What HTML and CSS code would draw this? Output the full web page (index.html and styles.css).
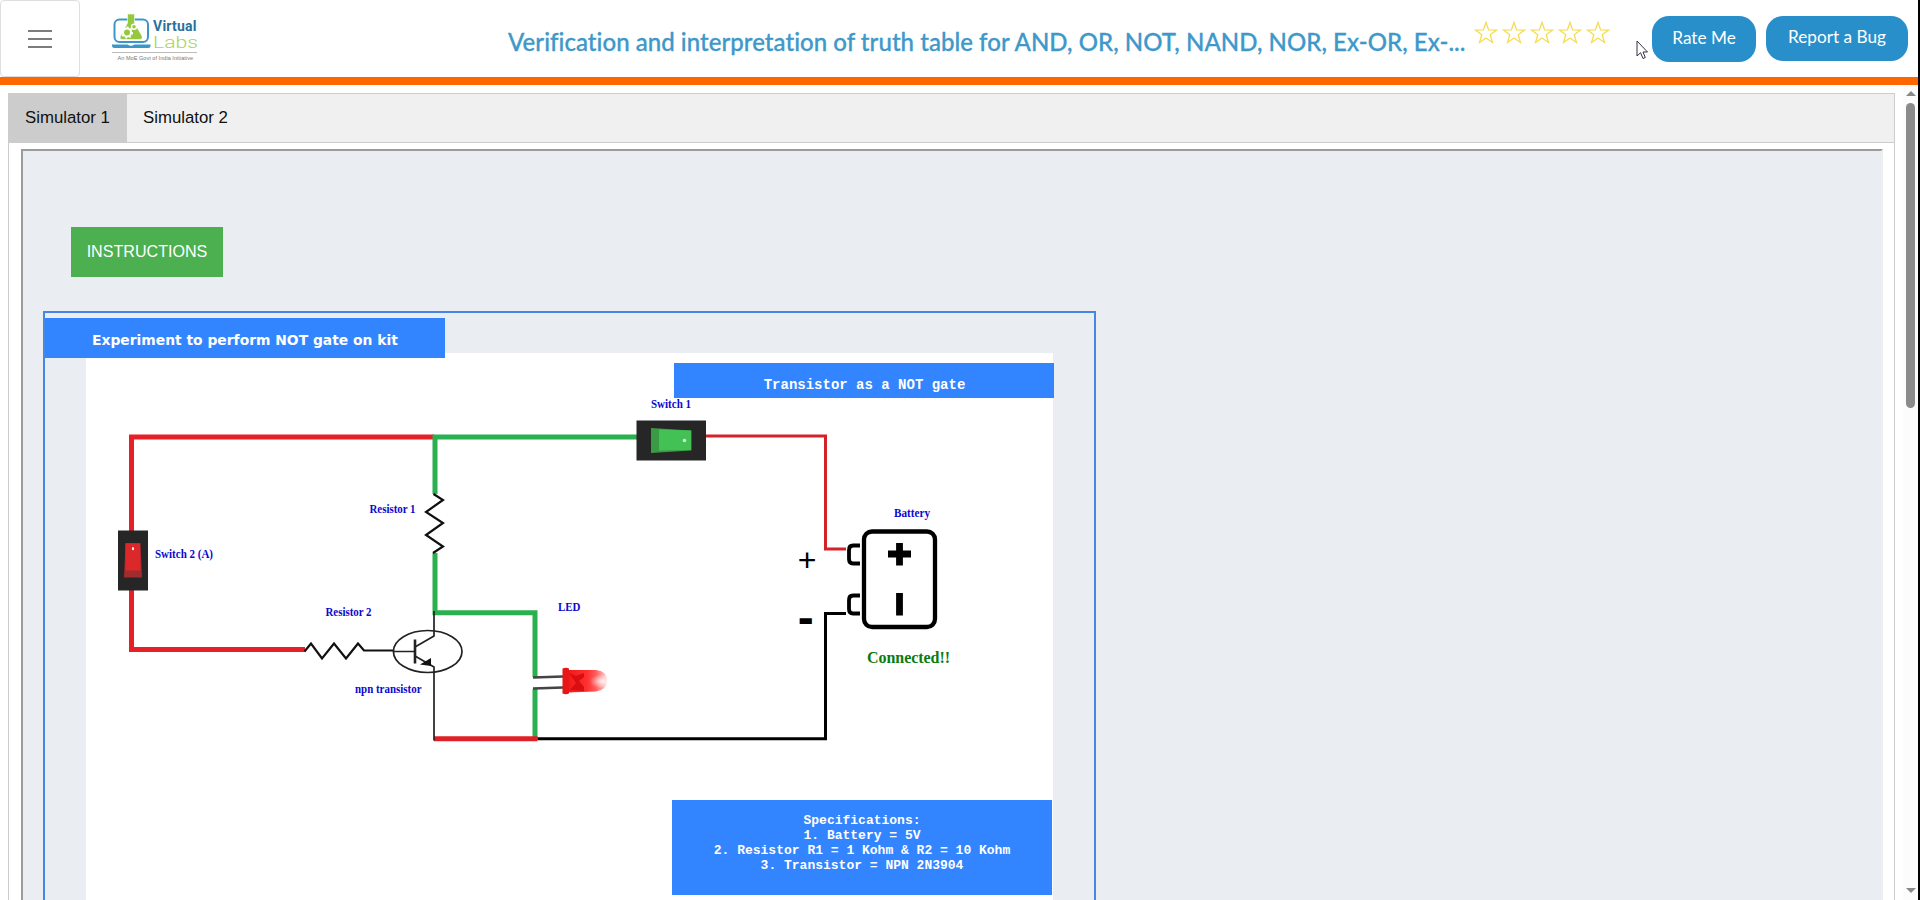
FILE: index.html
```html
<!DOCTYPE html>
<html lang="en">
<head>
<meta charset="utf-8">
<title>Virtual Labs</title>
<link rel="stylesheet" href="styles.css">
</head>
<body>
<div class="page">
  <header class="header">
    <button class="menu" aria-label="Menu"><span></span><span></span><span></span></button>
    <svg class="logo" viewBox="110 10 92 54">
      <rect x="114.500" y="19.500" width="33.500" height="22.500" rx="5" fill="#fff" stroke="#3c97c9" stroke-width="2"/>
      <path d="M112 44.500H127.500Q131 47 134.500 44.500H150.500V46.500Q150 48 148 48H114.500Q112 48 112 46Z" fill="#3c97c9"/>
      <path d="M127.500 14H134.500V23L142 36Q143 39.500 139.500 39.500H123Q119 39.500 120.500 36L127.500 23Z" fill="#95c93d" stroke="#fff" stroke-width=".6"/>
      <circle cx="127" cy="32.500" r="4" fill="#95c93d" stroke="#fff" stroke-width="2"/>
      <circle cx="127" cy="32.500" r="5.300" fill="none" stroke="#fff" stroke-width="1.400" stroke-dasharray="2 2"/>
      <circle cx="134" cy="26.700" r="2.500" fill="#95c93d" stroke="#fff" stroke-width="1.400"/>
      <text class="logo-virtual" x="153" y="31" textLength="43.500">Virtual</text>
      <text class="logo-labs" x="153" y="48" textLength="45" lengthAdjust="spacingAndGlyphs">Labs</text>
      <path d="M112 52.500H197" stroke="#bbb" stroke-width="1"/>
      <text class="logo-sub" x="117.500" y="59.500" textLength="75.500">An MoE Govt of India Initiative</text>
    </svg>
    <h1 class="title">Verification and interpretation of truth table for AND, OR, NOT, NAND, NOR, Ex-OR, Ex-...</h1>
    <svg class="stars" viewBox="0 0 140 24">
      <defs><path id="star" d="M12 1.500L14.600 8.800L22.500 9L16.200 13.800L18.500 21.500L12 17L5.500 21.500L7.800 13.800L1.500 9L9.400 8.800Z"/></defs>
      <use href="#star"/><use href="#star" x="28"/><use href="#star" x="56"/><use href="#star" x="84"/><use href="#star" x="112"/>
    </svg>
    <button class="pill rate">Rate Me</button>
    <button class="pill report">Report a Bug</button>
  </header>
  <div class="body">
    <main class="panel">
      <nav class="tabs"><a class="tab active">Simulator 1</a><a class="tab">Simulator 2</a></nav>
      <section class="frame">
        <button class="instructions">INSTRUCTIONS</button>
        <div class="kit">
          <h2 class="kit-title">Experiment to perform NOT gate on kit</h2>
          <div class="board">
            <svg class="circuit" viewBox="86 353 968 547">
              <defs>
                <linearGradient id="led"><stop offset="0" stop-color="#f01818"/><stop offset=".5" stop-color="#ff3030"/><stop offset=".72" stop-color="#ff5c5c"/><stop offset="1" stop-color="#ffd6d6"/></linearGradient>
                <radialGradient id="glow" cx=".88" cy=".5" r=".32"><stop offset="0" stop-color="#fff" stop-opacity=".8"/><stop offset="1" stop-color="#fff" stop-opacity="0"/></radialGradient>
              </defs>
              <g fill="none" stroke-width="5">
                <path stroke="#e71f27" d="M434 437H131.500V649.500H305"/>
                <path stroke="#2ab04e" d="M637 437H435V494M435 553V612.700H535V677M435 434.500V440M535 689V738"/>
                <path stroke="#df2027" d="M434 738.700H537.500"/>
              </g>
              <g fill="none" stroke-width="3">
                <path stroke="#d4222a" d="M706 436H825.500V549H846"/>
                <path stroke="#000" d="M537.500 738.700H825.500V613.500H846"/>
              </g>
              <g fill="none" stroke="#111" stroke-width="2.200">
                <path d="M433.500 494L443 500L426 512L443 523L426 535L443 546.500L433 553"/>
                <path d="M304.500 651.500L311 643.500L322 658.500L334 643.500L346 658.500L358 643.500L364 650.500H393"/>
              </g>
              <g fill="none" stroke="#222" stroke-width="1.700">
                <ellipse cx="427.700" cy="651.500" rx="34.300" ry="21"/>
                <path d="M393 651.500H415M415 647L434 636V611M415 656L434 667V740.500"/>
                <path d="M415 639.500V663.500" stroke-width="2.600"/>
                <path d="M420 664.500L431 658V666Z" fill="#111" stroke="none"/>
              </g>
              <rect x="636.500" y="420.500" width="69.500" height="40" fill="#262626"/>
              <path d="M651 428L691.500 430.500V450.500L651 453Z" fill="#3a9a46"/>
              <path d="M659 429.500L691 430.500V450L659 450.500Z" fill="#44c154"/>
              <circle cx="684.500" cy="440.500" r="1.800" fill="#c8f0cc"/>
              <rect x="118" y="530.500" width="30" height="60" fill="#262626"/>
              <path d="M125.500 543H140.500L142 577.500H124Z" fill="#a02c2e"/>
              <path d="M125.500 543.500H140L140.500 570.500H125.500Z" fill="#dc282b"/>
              <ellipse cx="133" cy="548.700" rx="1" ry="1.600" fill="#fff"/>
              <path d="M533 677.500L563 676.500M533 688.500L563 687.500" stroke="#444" stroke-width="2.600"/>
              <path d="M567 670L596 670Q607 671 607 680.500Q607 690 596 691.500L567 692.500Z" fill="url(#led)"/>
              <path d="M569 673L576 676L584 673V677L579 681L584 687V691L570 690L576 683Z" fill="#d80e10"/>
              <path d="M567 670L596 670Q607 671 607 680.500Q607 690 596 691.500L567 692.500Z" fill="url(#glow)"/>
              <path d="M562.500 668.500Q566 667 569 668.500V693.500Q566 695 562.500 693.500Z" fill="#e81616"/>
              <g fill="none" stroke="#000">
                <rect x="864" y="531.500" width="71" height="95.500" rx="8" stroke-width="4.300"/>
                <path d="M860 545.500H853Q849 545.500 849 550V559Q849 563.500 853 563.500H860M860 595.500H853Q849 595.500 849 600V609Q849 613.500 853 613.500H860" stroke-width="3.800"/>
                <path d="M888 554H911M899.500 543V565.500M899.500 593V615.500" stroke-width="6.800"/>
              </g>
              <text class="plus" x="797.700" y="570.500">+</text>
              <text class="minus" x="797.700" y="633.500">-</text>
              <g class="labels">
                <text x="651" y="407.500" textLength="40" lengthAdjust="spacingAndGlyphs">Switch 1</text>
                <text x="155" y="558" textLength="58" lengthAdjust="spacingAndGlyphs">Switch 2 (A)</text>
                <text x="369.500" y="513.300" textLength="46" lengthAdjust="spacingAndGlyphs">Resistor 1</text>
                <text x="325.500" y="616" textLength="46" lengthAdjust="spacingAndGlyphs">Resistor 2</text>
                <text x="355" y="693.300" textLength="66.500" lengthAdjust="spacingAndGlyphs">npn transistor</text>
                <text x="558" y="611" textLength="22.500" lengthAdjust="spacingAndGlyphs">LED</text>
                <text x="894" y="516.700" textLength="36" lengthAdjust="spacingAndGlyphs">Battery</text>
              </g>
              <text class="status" x="867" y="663" textLength="83">Connected!!</text>
            </svg>
            <div class="caption">Transistor as a NOT gate</div>
            <div class="specs">Specifications:<br>1. Battery = 5V<br>2. Resistor R1 = 1 Kohm &amp; R2 = 10 Kohm<br>3. Transistor = NPN 2N3904</div>
          </div>
        </div>
      </section>
    </main>
    <div class="scrollbar"><i class="up"></i><i class="thumb"></i><i class="down"></i></div>
  </div>
  <svg class="cursor" viewBox="0 0 13 20"><path d="M1 1V16L4.500 12.700L7 18.500L9.300 17.500L7 12H11.500Z" fill="#fff" stroke="#334" stroke-width="1"/></svg>
</div>
</body>
</html>
```
FILE: styles.css
```css
* { box-sizing: border-box; }
body { margin: 0; background: #fff; font-family: "Liberation Sans", Arial, sans-serif; }
button { border: 0; margin: 0; font-family: inherit; }
.page { position: relative; display: flex; flex-direction: column; width: 1920px; height: 900px; overflow: hidden; border-right: 2px solid #000; }
.header { display: flex; align-items: flex-start; flex: none; height: 85px; border-bottom: 8px solid #ff6600; }
.menu { display: flex; flex-direction: column; align-items: center; justify-content: center; gap: 6px; width: 80px; height: 77px; padding: 0; background: #fff; border: 1px solid #dedede; border-radius: 4px; }
.menu span { width: 24px; height: 2px; background: #7c7c7c; }
.logo { width: 92px; height: 54px; margin: 10px 0 0 30px; }
.logo-virtual { font: bold 14px Roboto, sans-serif; fill: #28719e; }
.logo-labs { font: 300 17px Roboto, sans-serif; fill: #a9d45c; }
.logo-sub { font: 5.500px "Liberation Sans", sans-serif; fill: #777; }
.title { width: 960px; margin: 25px 0 0 306px; font: 500 24px/34px Lato, sans-serif; letter-spacing: .04px; color: #3e98c9; white-space: nowrap; -webkit-text-stroke: .3px #3e98c9; }
.stars { flex: none; width: 140px; height: 24px; margin: 21px 0 0 6px; fill: #fff; stroke: #f6dc55; stroke-width: 1.300; }
.pill { flex: none; padding: 0 0 3px; background: #288fca; color: #fff; border-radius: 17px; font: 17.200px/36px Lato, sans-serif; white-space: nowrap; }
.rate { width: 104px; height: 46px; margin: 16px 0 0 38px; }
.report { width: 142px; height: 45px; margin: 16px 0 0 10px; }
.body { display: flex; flex: 1; min-height: 0; }
.panel { display: flex; flex-direction: column; width: 1887px; margin: 8px 8px 0; border: 1px solid #ccc; border-bottom: 0; }
.tabs { display: flex; flex: none; height: 49px; background: #f0f0f0; border-bottom: 1px solid #ccc; }
.tab { padding: 14px 16px 0; font-size: 16.800px; line-height: 20px; color: #111; white-space: nowrap; }
.tab.active { width: 118px; background: #ccc; }
.frame { flex: 1; margin: 6px 11px 0 12px; padding: 76px 0 0 20px; background: #eaeef3; border-top: 2px solid #9b9b9b; border-left: 2px solid #9b9b9b; border-right: 2px solid #eceeef; }
.instructions { display: block; width: 152px; height: 50px; margin: 0 0 34px 28px; padding: 0 0 1px; background: #4caf50; color: #fff; font-size: 16.100px; }
.kit { position: relative; width: 1053px; height: 600px; padding: 40px 0 0 41px; border: 2px solid #4488e4; border-bottom: 0; }
.kit-title { position: absolute; left: 0; top: 5px; z-index: 1; width: 399.500px; height: 40px; margin: 0; padding-left: 47px; background: #3385ff; color: #fff; font: bold 13.870px/45px "DejaVu Sans", sans-serif; white-space: nowrap; }
.board { position: relative; width: 967px; height: 560px; background: #fff; }
.circuit { display: block; width: 968px; height: 547px; }
.labels { font: bold 12px "Liberation Serif", serif; fill: #0909cf; }
.status { font: bold 16px "Liberation Serif", serif; fill: #087c10; }
.plus { font: 32px "Liberation Sans", sans-serif; }
.minus { font: bold 48px "Liberation Sans", sans-serif; }
.caption, .specs { position: absolute; width: 380px; background: #3385ff; color: #fff; text-align: center; font-family: "Liberation Mono", monospace; font-weight: bold; }
.caption { left: 588px; top: 9.500px; height: 35px; padding-left: 1px; font-size: 14px; line-height: 44px; }
.specs { left: 586px; top: 447px; height: 95px; padding-top: 13px; font-size: 13px; line-height: 15px; }
.scrollbar { display: flex; flex-direction: column; align-items: center; width: 15px; padding: 6px 0 7px; background: #fcfcfc; }
.up { border: 5px solid transparent; border-top: 0; border-bottom: 5px solid #888; }
.thumb { width: 9px; height: 305px; margin-top: 7px; background: #8b8b8b; border-radius: 5px; }
.down { margin-top: auto; border: 5px solid transparent; border-bottom: 0; border-top: 5px solid #888; }
.cursor { position: absolute; left: 1636px; top: 40px; width: 13px; height: 20px; }
```
